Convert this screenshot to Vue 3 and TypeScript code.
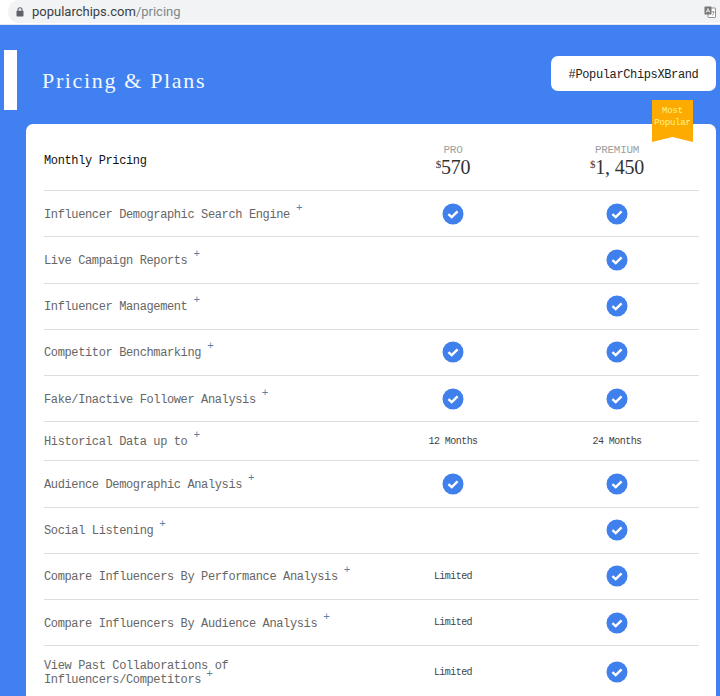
<script setup lang="ts">
interface Row { label: string; pro: string; premium: string; kind?: string }
const rows: Row[] = [
  { label: 'Influencer Demographic Search Engine', pro: 'check', premium: 'check' },
  { label: 'Live Campaign Reports', pro: '', premium: 'check' },
  { label: 'Influencer Management', pro: '', premium: 'check' },
  { label: 'Competitor Benchmarking', pro: 'check', premium: 'check' },
  { label: 'Fake/Inactive Follower Analysis', pro: 'check', premium: 'check' },
  { label: 'Historical Data up to', pro: '12 Months', premium: '24 Months', kind: 'short' },
  { label: 'Audience Demographic Analysis', pro: 'check', premium: 'check' },
  { label: 'Social Listening', pro: '', premium: 'check' },
  { label: 'Compare Influencers By Performance Analysis', pro: 'Limited', premium: 'check' },
  { label: 'Compare Influencers By Audience Analysis', pro: 'Limited', premium: 'check' },
  { label: 'View Past Collaborations of Influencers/Competitors', pro: 'Limited', premium: 'check', kind: 'tall' },
]
</script>

<template>
  <div class="page">
    <div class="chrome">
      <div class="address">
        <svg class="lock" width="8" height="10" viewBox="0 0 8 10">
          <path d="M2 4V2.8a2 2 0 0 1 4 0V4" fill="none" stroke="#5f6368" stroke-width="1.1" />
          <rect x="0.5" y="3.8" width="7" height="5.7" rx="0.8" fill="#5f6368" />
        </svg>
        <span class="domain">popularchips.com</span><span class="path">/pricing</span>
        <svg class="translate" width="12" height="12" viewBox="0 0 12 12">
          <rect x="4" y="2" width="7.5" height="9.5" rx="0.6" fill="#fff" stroke="#777" stroke-width="0.8" />
          <rect x="0.5" y="0.5" width="7" height="8" rx="0.6" fill="#777" />
          <path d="M2.2 6.5 4 2.5l1.8 4M2.9 5.2h2.2" fill="none" stroke="#fff" stroke-width="0.8" />
          <path d="M7.5 6h3M9 5v1M8 9.5c1-.6 1.6-1.8 1.9-3.5" fill="none" stroke="#777" stroke-width="0.7" />
        </svg>
      </div>
    </div>

    <main class="blue">
      <header class="hero">
        <div class="tab"></div>
        <h1 class="title">Pricing &amp; Plans</h1>
        <div class="tag">#PopularChipsXBrand</div>
      </header>

      <section class="card">
        <div class="ribbon">Most<br />Popular</div>
        <div class="row head">
          <div class="label main">Monthly Pricing</div>
          <div class="cell">
            <div class="plan">PRO</div>
            <div class="price"><sup>$</sup>570</div>
          </div>
          <div class="cell">
            <div class="plan">PREMIUM</div>
            <div class="price"><sup>$</sup>1, 450</div>
          </div>
        </div>

        <div v-for="r in rows" :key="r.label" class="row" :class="r.kind">
          <div class="label">
            <span class="text">{{ r.label }}</span><span class="plus">+</span>
          </div>
          <div v-for="(v, i) in [r.pro, r.premium]" :key="i" class="cell">
            <svg v-if="v === 'check'" class="check" width="22" height="22" viewBox="0 0 22 22">
              <circle cx="11" cy="11" r="10.5" fill="#4080ec" />
              <path d="M6.4 11.2 9.7 14.2 15.6 8.4" fill="none" stroke="#fff" stroke-width="2.4" />
            </svg>
            <span v-else class="note">{{ v }}</span>
          </div>
        </div>
      </section>
    </main>
  </div>
</template>

<style>
html, body { margin: 0; background: #4080f0; }
</style>

<style scoped>
.page {
  width: 720px;
  height: 696px;
  overflow: hidden;
  display: flex;
  flex-direction: column;
  font-family: "Liberation Mono", monospace;
}
.chrome {
  height: 25px;
  flex: none;
  box-sizing: border-box;
  background: #fff;
  padding: 0 0 2px 8px;
  border-bottom: 1px solid #e4e8ee;
}
.address {
  height: 23px;
  background: #f1f3f4;
  border-radius: 12px 0 0 12px;
  display: flex;
  align-items: center;
  padding: 0 4px 0 8px;
  font-family: "Roboto", sans-serif;
  font-size: 13px;
}
.lock { margin-right: 8px; flex: none; }
.domain { color: #3c4043; }
.path { color: #80868b; }
.translate { margin-left: auto; }
.blue {
  flex: 1;
  background: #4080f0;
  display: flex;
  flex-direction: column;
}
.hero {
  height: 99px;
  flex: none;
  display: flex;
  align-items: flex-start;
  padding: 25px 4px 0 4px;
  box-sizing: border-box;
}
.tab {
  width: 13px;
  height: 60px;
  background: #fff;
  flex: none;
}
.title {
  margin: 18px 0 0 25px;
  font-family: "Liberation Serif", serif;
  font-weight: 400;
  font-size: 22px;
  line-height: 26px;
  letter-spacing: 1.65px;
  color: #f2f8ff;
}
.tag {
  margin-left: auto;
  margin-top: 6px;
  width: 165px;
  height: 35px;
  background: #fff;
  border-radius: 7px;
  display: flex;
  align-items: center;
  justify-content: center;
  padding-top: 2px;
  box-sizing: border-box;
  font-size: 12px;
  letter-spacing: -0.37px;
  color: #222;
}
.card {
  position: relative;
  margin: 0 4px 0 26px;
  flex: 1;
  background: #fff;
  border-radius: 7px 7px 0 0;
  padding: 0 17px 0 18px;
}
.ribbon {
  position: absolute;
  top: -24px;
  right: 23px;
  width: 41px;
  height: 42px;
  box-sizing: border-box;
  padding-top: 5px;
  background: #fdab00;
  clip-path: polygon(0 0, 100% 0, 100% 100%, 50% 88%, 0 100%);
  color: #fff48c;
  font-size: 9px;
  line-height: 12px;
  letter-spacing: -0.2px;
  text-align: center;
}
.row {
  display: grid;
  grid-template-columns: 327px 164px 164px;
  align-items: center;
  height: 46.25px;
  box-sizing: border-box;
  border-bottom: 1px solid #dcdee0;
}
.head { height: 67px; padding-top: 8px; }
.short { height: 39px; }
.tall { height: 52px; border-bottom: none; }
.label {
  font-size: 12px;
  line-height: 14px;
  letter-spacing: -0.37px;
  color: #666;
  padding-top: 2px;
  box-sizing: border-box;
}
.tall .label { padding-right: 120px; }
.main { color: #111; padding-top: 0; }
.plus {
  margin-left: 6px;
  position: relative;
  top: -7px;
  font-size: 11px;
  color: #5a80a8;
}
.tall .plus { margin-left: 5px; top: -6px; }
.cell {
  display: flex;
  flex-direction: column;
  align-items: center;
  justify-content: center;
}
.plan {
  font-size: 11px;
  line-height: 12px;
  color: #a0a0a0;
  letter-spacing: -0.3px;
}
.price {
  font-family: "Liberation Serif", serif;
  font-size: 20px;
  line-height: 22px;
  letter-spacing: -0.2px;
  color: #333;
}
.price sup {
  font-size: 11px;
  line-height: 0;
  vertical-align: 6px;
}
.note {
  font-size: 10px;
  letter-spacing: -0.55px;
  color: #444;
}
</style>
